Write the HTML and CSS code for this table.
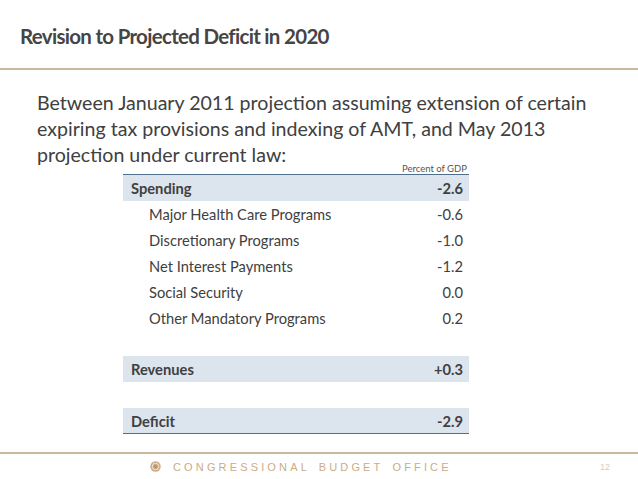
FILE: index.html
```html
<!DOCTYPE html>
<html>
<head>
<meta charset="utf-8">
<link rel="stylesheet" href="styles.css">
</head>
<body>
<div class="slide">
  <header class="head">
    <h1 class="title">Revision to Projected Deficit in 2020</h1>
  </header>
  <main class="content">
    <p class="lead">Between January 2011 projection assuming extension of certain expiring tax provisions and indexing of AMT, and May 2013 projection under current law:</p>
    <div class="tablewrap">
      <div class="unit">Percent of GDP</div>
      <div class="table">
        <div class="row band topline"><span>Spending</span><span>-2.6</span></div>
        <div class="row sub"><span>Major Health Care Programs</span><span>-0.6</span></div>
        <div class="row sub"><span>Discretionary Programs</span><span>-1.0</span></div>
        <div class="row sub"><span>Net Interest Payments</span><span>-1.2</span></div>
        <div class="row sub"><span>Social Security</span><span>0.0</span></div>
        <div class="row sub"><span>Other Mandatory Programs</span><span>0.2</span></div>
        <div class="row blank"></div>
        <div class="row band"><span>Revenues</span><span>+0.3</span></div>
        <div class="row blank2"></div>
        <div class="row band bottomline"><span>Deficit</span><span>-2.9</span></div>
      </div>
    </div>
  </main>
  <footer class="foot">
    <div class="brand">
      <svg class="logo" width="11" height="11" viewBox="0 0 11 11">
        <circle cx="5.5" cy="5.5" r="5.2" fill="#c9ab86"/>
        <circle cx="5.5" cy="5.5" r="3.3" fill="none" stroke="#efe4d4" stroke-width="1"/>
        <circle cx="5.5" cy="5.5" r="1.6" fill="#b99670"/>
      </svg>
      <span class="cbo">CONGRESSIONAL BUDGET OFFICE</span>
    </div>
    <span class="page">12</span>
  </footer>
</div>
</body>
</html>
```

FILE: styles.css
```css
html, body {
  margin: 0;
  padding: 0;
  background: #ffffff;
}
.slide {
  width: 638px;
  height: 479px;
  display: flex;
  flex-direction: column;
  font-family: Lato, "Open Sans", sans-serif;
  color: #404040;
  overflow: hidden;
}
.head {
  height: 68px;
  flex: none;
  border-bottom: 2px solid #c8b99d;
  display: flex;
  align-items: flex-start;
}
.title {
  margin: 22px 0 0 20px;
  font-size: 20.5px;
  font-weight: 700;
  line-height: 28px;
  color: #454545;
  letter-spacing: -0.7px;
}
.content {
  flex: 1;
  display: flex;
  flex-direction: column;
  padding-top: 20px;
}
.lead {
  margin: 0 0 0 37px;
  width: 580px;
  font-size: 19.6px;
  line-height: 26px;
  color: #404040;
}
.tablewrap {
  margin: -5px 0 0 123px;
  width: 346px;
  display: flex;
  flex-direction: column;
}
.unit {
  align-self: flex-end;
  font-size: 9.5px;
  line-height: 11px;
  color: #555;
  margin-right: 2px;
}
.table {
  display: flex;
  flex-direction: column;
}
.row {
  height: 26px;
  flex: none;
  display: flex;
  justify-content: space-between;
  align-items: center;
  font-size: 14.7px;
  padding: 0 6px 0 26px;
  color: #404040;
}
.band {
  background: #dce4ee;
  font-weight: 700;
  padding-left: 8px;
}
.topline {
  border-top: 1px solid #4f6f8f;
  height: 26px;
}
.bottomline {
  border-bottom: 1px solid #4f6f8f;
  height: 25px;
}
.blank {
  height: 25px;
}
.blank2 {
  height: 26px;
}
.foot {
  height: 25px;
  flex: none;
  border-top: 2px solid #c8b99d;
  display: flex;
  align-items: center;
  justify-content: space-between;
  padding: 0 28px 0 150px;
}
.brand {
  display: flex;
  align-items: center;
  gap: 12px;
}
.cbo {
  font-family: "Liberation Sans", Arial, sans-serif;
  font-size: 11px;
  letter-spacing: 3.15px;
  word-spacing: 3px;
  color: #c9ac88;
}
.page {
  font-family: "Liberation Sans", Arial, sans-serif;
  font-size: 9px;
  color: #d8ccc0;
}
```
